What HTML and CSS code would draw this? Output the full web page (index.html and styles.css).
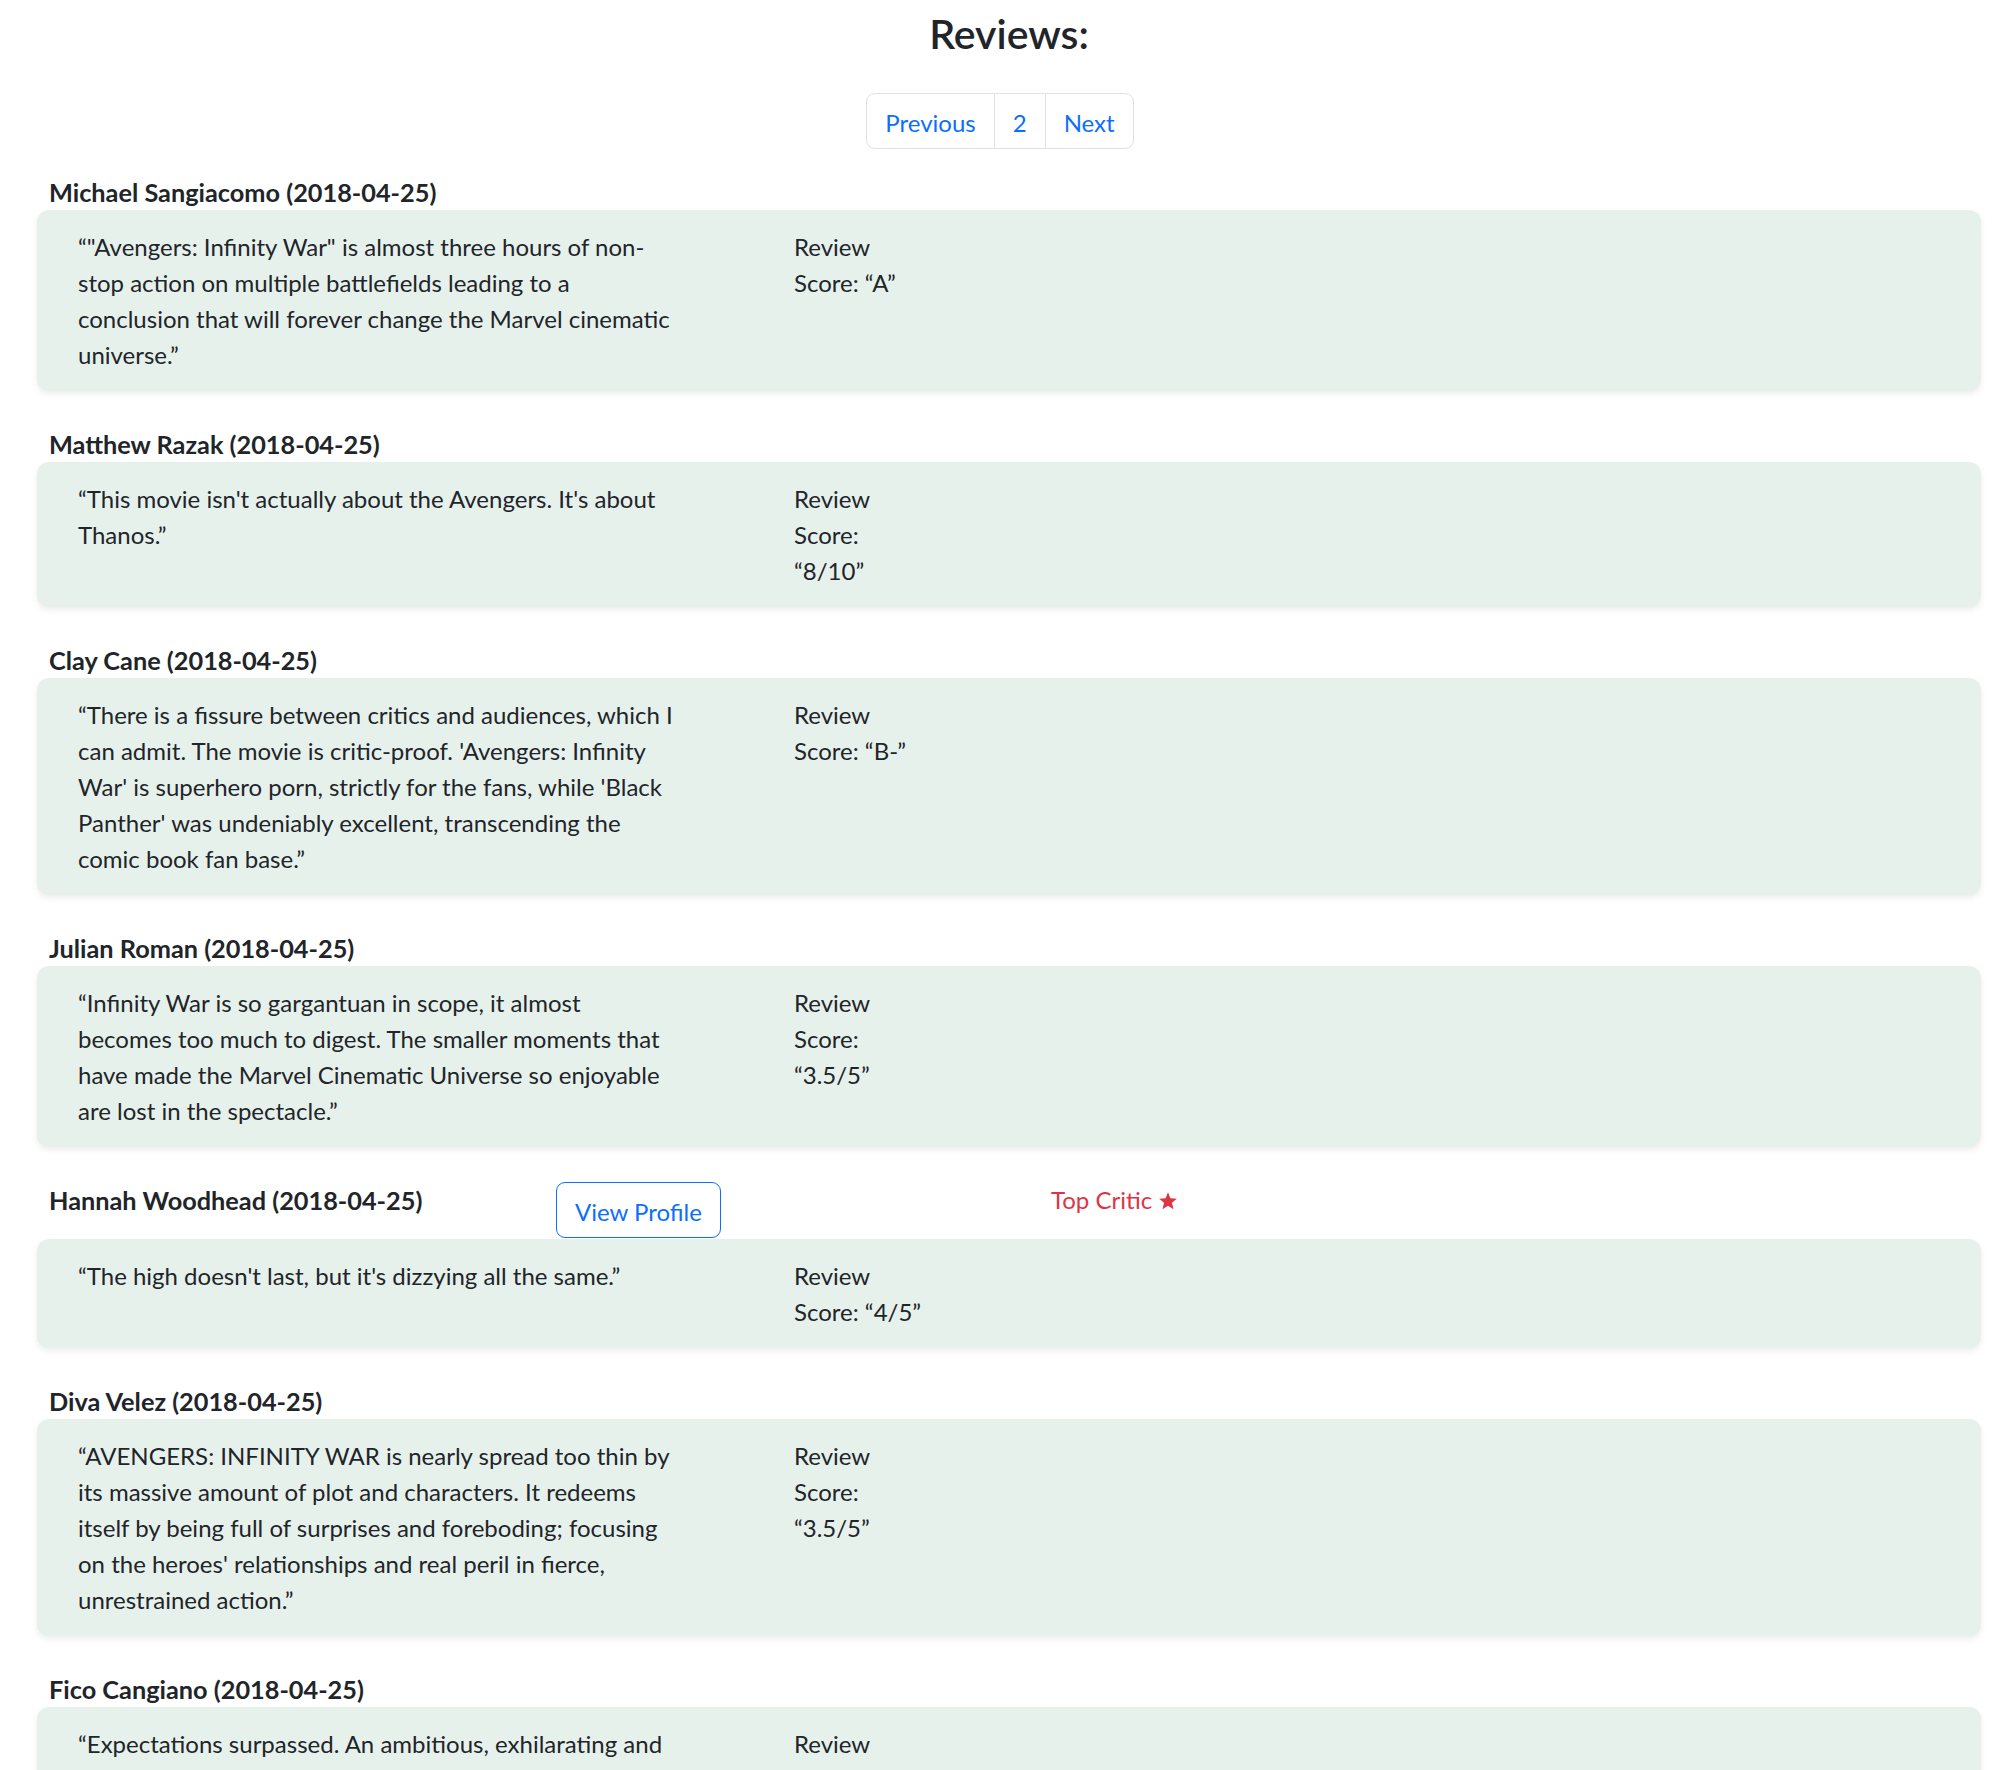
FILE: index.html
```html
<!DOCTYPE html>
<html lang="en">
<head>
<meta charset="utf-8">
<title>Reviews</title>
<link rel="stylesheet" href="styles.css">
</head>
<body>
<main class="page">
  <div class="scroll-edge"></div>
  <h1 class="title">Reviews:</h1>
  <nav class="pager-wrap" aria-label="Review pages">
    <ul class="pager">
      <li><a class="page-link" href="#">Previous</a></li>
      <li><a class="page-link" href="#">2</a></li>
      <li><a class="page-link" href="#">Next</a></li>
    </ul>
  </nav>

  <div class="reviews">
    <section class="review">
      <div class="review-head"><h2 class="critic">Michael Sangiacomo (2018-04-25)</h2></div>
      <div class="review-card">
        <p class="quote">“"Avengers: Infinity War" is almost three hours of non-stop action on multiple battlefields leading to a conclusion that will forever change the Marvel cinematic universe.”</p>
        <p class="score">Review Score: “A”</p>
      </div>
    </section>

    <section class="review">
      <div class="review-head"><h2 class="critic">Matthew Razak (2018-04-25)</h2></div>
      <div class="review-card">
        <p class="quote">“This movie isn't actually about the Avengers. It's about Thanos.”</p>
        <p class="score">Review Score: “8/10”</p>
      </div>
    </section>

    <section class="review">
      <div class="review-head"><h2 class="critic">Clay Cane (2018-04-25)</h2></div>
      <div class="review-card">
        <p class="quote">“There is a fissure between critics and audiences, which I can admit. The movie is critic-proof. 'Avengers: Infinity War' is superhero porn, strictly for the fans, while 'Black Panther' was undeniably excellent, transcending the comic book fan base.”</p>
        <p class="score">Review Score: “B-”</p>
      </div>
    </section>

    <section class="review">
      <div class="review-head"><h2 class="critic">Julian Roman (2018-04-25)</h2></div>
      <div class="review-card">
        <p class="quote">“Infinity War is so gargantuan in scope, it almost becomes too much to digest. The smaller moments that have made the Marvel Cinematic Universe so enjoyable are lost in the spectacle.”</p>
        <p class="score">Review Score: “3.5/5”</p>
      </div>
    </section>

    <section class="review">
      <div class="review-head review-head--top">
        <h2 class="critic">Hannah Woodhead (2018-04-25)</h2>
        <div><a class="btn-outline" href="#">View Profile</a></div>
        <div class="top-critic">Top Critic <svg class="star" viewBox="0 0 24 24" aria-hidden="true"><polygon points="12,1.5 14.9,8.6 22.6,9.2 16.7,14.2 18.6,21.8 12,17.7 5.4,21.8 7.3,14.2 1.4,9.2 9.1,8.6"/></svg></div>
      </div>
      <div class="review-card">
        <p class="quote">“The high doesn't last, but it's dizzying all the same.”</p>
        <p class="score">Review Score: “4/5”</p>
      </div>
    </section>

    <section class="review">
      <div class="review-head"><h2 class="critic">Diva Velez (2018-04-25)</h2></div>
      <div class="review-card">
        <p class="quote">“AVENGERS: INFINITY WAR is nearly spread too thin by its massive amount of plot and characters. It redeems itself by being full of surprises and foreboding; focusing on the heroes' relationships and real peril in fierce, unrestrained action.”</p>
        <p class="score">Review Score: “3.5/5”</p>
      </div>
    </section>

    <section class="review">
      <div class="review-head"><h2 class="critic">Fico Cangiano (2018-04-25)</h2></div>
      <div class="review-card">
        <p class="quote">“Expectations surpassed. An ambitious, exhilarating and emotionally resonant chapter that delivers on a decade of storytelling.”</p>
        <p class="score">Review Score: “4.5/5”</p>
      </div>
    </section>
  </div>
</main>
</body>
</html>
```

FILE: styles.css
```css
* {
  box-sizing: border-box;
}

body {
  margin: 0;
  font-family: Lato, "Open Sans", sans-serif;
  font-size: 24px;
  line-height: 36px;
  color: #212529;
  background: #fff;
}

.page {
  padding: 0 28px 0 37px;
}

.scroll-edge {
  height: 0;
  box-shadow: 0 3px 6px rgba(0, 0, 0, 0.075);
}

.title {
  margin: 8.5px 0 0;
  text-align: center;
  font-size: 41px;
  font-weight: 600;
  line-height: 49.2px;
}

.pager-wrap {
  display: flex;
  justify-content: center;
  margin-top: 35px;
}

.pager {
  display: flex;
  list-style: none;
  margin: 0 18px 0 0;
  padding: 0;
}

.page-link {
  display: block;
  padding: 11px 18px 7px;
  border: 1px solid #dee2e6;
  color: #0d6efd;
  text-decoration: none;
  line-height: 36px;
  background: #fff;
}

.pager li + li .page-link {
  margin-left: -1px;
}

.pager li:first-child .page-link {
  border-radius: 9px 0 0 9px;
}

.pager li:last-child .page-link {
  border-radius: 0 9px 9px 0;
}

.reviews {
  margin-top: 25px;
  display: flex;
  flex-direction: column;
  gap: 34.5px;
}

.review-head {
  display: grid;
  grid-template-columns: 507px 495px auto;
  align-items: start;
  padding-left: 12px;
}

.review-head--top {
  padding-bottom: 1.5px;
}

.critic {
  margin: 3.5px 0 3px;
  font-size: 25.3px;
  font-weight: 700;
  line-height: 30px;
}

.btn-outline {
  display: inline-block;
  padding: 11px 18px 7px;
  border: 1px solid #0d6efd;
  border-radius: 9px;
  color: #0d6efd;
  background: #fff;
  text-decoration: none;
  line-height: 36px;
}

.top-critic {
  margin-top: 3.7px;
  color: #dc3545;
  line-height: 30px;
}

.star {
  width: 20px;
  height: 20px;
  fill: #dc3545;
  vertical-align: -2px;
}

.review-card {
  display: grid;
  grid-template-columns: 600px 134px;
  column-gap: 116px;
  align-items: start;
  padding: 19px 41px 18px;
  background: #e7f1ec;
  border-radius: 12px;
  box-shadow: 0 3px 6px rgba(0, 0, 0, 0.075);
}

.quote,
.score {
  margin: 0;
}
```
